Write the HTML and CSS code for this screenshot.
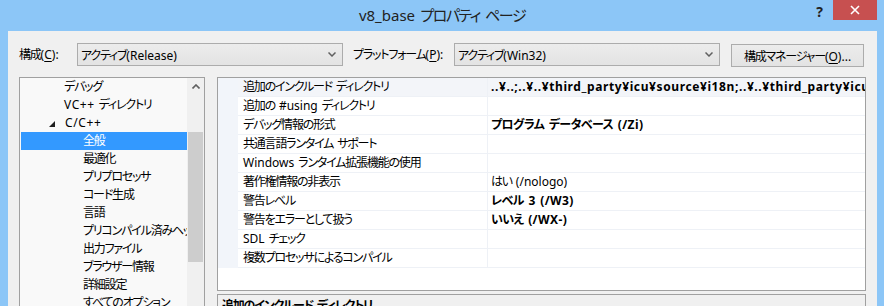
FILE: index.html
```html
<!DOCTYPE html>
<html lang="ja">
  <head>
    <meta charset="UTF-8" />
    <title>v8_base プロパティ ページ</title>
    <link rel="stylesheet" href="styles.css">
  </head>
  <body>
    <div class="window">
      <header class="titlebar">
        <h1 class="title"><span class="en">v8_base</span> プロパティ ページ</h1>
        <div class="caption">
          <span class="help">?</span>
          <span class="close">
            <svg width="10" height="10" viewBox="0 0 10 10">
              <path d="M1 1 L9 9 M9 1 L1 9" stroke="#fff" stroke-width="1.6" />
            </svg>
          </span>
        </div>
      </header>
      <div class="client">
        <div class="toolbar">
          <span class="lbl lbl-config">構成<span class="en">(<u>C</u>):</span></span>
          <div class="combo">
            <span>アクティブ<span class="en">(Release)</span></span>
            <svg class="chevron" width="8" height="5" viewBox="0 0 8 5">
              <path d="M0.5 0.5 L4 4 L7.5 0.5" fill="none" stroke="#606060" stroke-width="1.5" />
            </svg>
          </div>
          <span class="lbl lbl-platform">プラットフォーム<span class="en">(<u>P</u>):</span></span>
          <div class="combo">
            <span>アクティブ<span class="en">(Win32)</span></span>
            <svg class="chevron" width="8" height="5" viewBox="0 0 8 5">
              <path d="M0.5 0.5 L4 4 L7.5 0.5" fill="none" stroke="#606060" stroke-width="1.5" />
            </svg>
          </div>
          <button class="btn">構成マネージャー<span class="en">(<u>O</u>)...</span></button>
        </div>

        <div class="panes">
          <div class="tree">
            <ul class="tree-list">
              <li class="lv1">デバッグ</li>
              <li class="lv1"><span class="en">VC++</span> ディレクトリ</li>
              <li class="lv1 open">
                <svg class="expander" width="6" height="6" viewBox="0 0 6 6">
                  <polygon points="6,0 6,6 0,6" fill="#1e1e1e" />
                </svg><span class="en">C/C++</span>
              </li>
              <li class="lv2 selected">全般</li>
              <li class="lv2">最適化</li>
              <li class="lv2">プリプロセッサ</li>
              <li class="lv2">コード生成</li>
              <li class="lv2">言語</li>
              <li class="lv2">プリコンパイル済みヘッダー</li>
              <li class="lv2">出力ファイル</li>
              <li class="lv2">ブラウザー情報</li>
              <li class="lv2">詳細設定</li>
              <li class="lv2">すべてのオプション</li>
            </ul>
            <div class="scrollbar">
              <div class="scroll-up">
                <svg width="8" height="5" viewBox="0 0 8 5">
                  <path d="M0.5 4.5 L4 1 L7.5 4.5" fill="none" stroke="#606060" stroke-width="1.6" />
                </svg>
              </div>
              <div class="thumb"></div>
            </div>
          </div>

          <div class="props">
            <div class="grid">
              <div class="row current">
                <span class="margin"></span>
                <span class="name">追加のインクルード ディレクトリ</span>
                <span class="value strong path">..¥..;..¥..¥third_party¥icu¥source¥i18n;..¥..¥third_party¥icu¥source¥common</span>
              </div>
              <div class="row">
                <span class="margin"></span>
                <span class="name">追加の <span class="en">#using</span> ディレクトリ</span>
                <span class="value"></span>
              </div>
              <div class="row">
                <span class="margin"></span>
                <span class="name">デバッグ情報の形式</span>
                <span class="value strong">プログラム データベース <span class="en">(/Zi)</span></span>
              </div>
              <div class="row">
                <span class="margin"></span>
                <span class="name">共通言語ランタイム サポート</span>
                <span class="value"></span>
              </div>
              <div class="row">
                <span class="margin"></span>
                <span class="name"><span class="en">Windows</span> ランタイム拡張機能の使用</span>
                <span class="value"></span>
              </div>
              <div class="row">
                <span class="margin"></span>
                <span class="name">著作権情報の非表示</span>
                <span class="value">はい <span class="en">(/nologo)</span></span>
              </div>
              <div class="row">
                <span class="margin"></span>
                <span class="name">警告レベル</span>
                <span class="value strong">レベル <span class="en">3 (/W3)</span></span>
              </div>
              <div class="row">
                <span class="margin"></span>
                <span class="name">警告をエラーとして扱う</span>
                <span class="value strong">いいえ <span class="en">(/WX-)</span></span>
              </div>
              <div class="row">
                <span class="margin"></span>
                <span class="name"><span class="en">SDL</span> チェック</span>
                <span class="value"></span>
              </div>
              <div class="row">
                <span class="margin"></span>
                <span class="name">複数プロセッサによるコンパイル</span>
                <span class="value"></span>
              </div>
            </div>
            <div class="desc">
              <strong>追加のインクルード ディレクトリ</strong>
            </div>
          </div>
        </div>
      </div>
    </div>
  </body>
</html>
```

FILE: styles.css
```css
* {
  box-sizing: border-box;
}
body {
  margin: 0;
  width: 884px;
  height: 306px;
  overflow: hidden;
  background-color: #8cc6f7;
  font-family: "Noto Sans", "Noto Sans CJK JP", sans-serif;
  font-size: 12px;
  font-feature-settings: "palt";
  letter-spacing: -1.2px;
  word-spacing: 2px;
  color: #000;
}
/* latin runs keep their natural spacing */
.en {
  letter-spacing: 0;
  word-spacing: 1px;
}
u {
  text-decoration-thickness: 1px;
  text-underline-offset: 2px;
}

/* title bar */
.titlebar {
  height: 31px;
  display: grid;
  grid-template-columns: 1fr auto 1fr;
}
.title {
  grid-column: 2;
  margin: 0;
  font-size: 15px;
  font-weight: normal;
  line-height: 31px;
  letter-spacing: -1.5px;
  word-spacing: 3px;
  color: #222;
}
.caption {
  grid-column: 3;
  justify-self: end;
  display: flex;
  align-items: flex-start;
  margin-right: 7px;
}
.help {
  font-weight: bold;
  font-size: 14px;
  line-height: 24px;
  letter-spacing: 0;
  color: #222;
  margin-right: 10px;
}
.close {
  width: 44px;
  height: 20px;
  background-color: #c75050;
  display: flex;
  align-items: center;
  justify-content: center;
}

/* dialog body */
.client {
  margin: 0 7px 0 8px;
  height: 275px;
  padding: 12px 11px 0;
  background-color: #f0f0f0;
}
.toolbar {
  display: flex;
  align-items: flex-start;
  height: 23px;
}
.lbl {
  line-height: 23px;
}
.lbl-config {
  width: 58px;
}
.lbl-platform {
  width: 101px;
  margin-left: 10px;
}
.combo {
  width: 266px;
  height: 23px;
  display: flex;
  align-items: center;
  justify-content: space-between;
  padding: 0 6px 0 3px;
  border: 1px solid #acacac;
  background: linear-gradient(#ececec, #e3e3e3);
}
.btn {
  width: 133px;
  height: 23px;
  margin: 1px 0 0 11px;
  padding: 0;
  border: 1px solid #acacac;
  background: linear-gradient(#ececec, #e3e3e3);
  font: inherit;
  letter-spacing: inherit;
  color: #000;
}

.panes {
  display: flex;
  gap: 12px;
  margin-top: 11px;
}

/* tree */
.tree {
  width: 186px;
  height: 240px;
  flex-shrink: 0;
  display: flex;
  border: 1px solid #a0a0a0;
  background-color: #f9f9f9;
}
.tree-list {
  flex: 1;
  min-width: 0;
  margin: 0;
  padding: 0;
  list-style: none;
  overflow: hidden;
}
.tree-list li {
  height: 18px;
  line-height: 18px;
  white-space: nowrap;
  overflow: hidden;
}
.tree-list .en {
  letter-spacing: 0.6px;
}
.lv1 {
  padding-left: 44px;
}
.lv1.open {
  padding-left: 29px;
}
.expander {
  margin-right: 10px;
  vertical-align: 0;
}
.lv2 {
  padding-left: 63px;
}
.selected {
  margin-left: 1px;
  padding-left: 62px;
  background-color: #3399ff;
  color: #fff;
}
.scrollbar {
  width: 17px;
  background-color: #f0f0f0;
}
.scroll-up {
  height: 17px;
  display: flex;
  align-items: center;
  justify-content: center;
}
.thumb {
  height: 130px;
  margin: 37px 1px 0;
  background-color: #cdcdcd;
}

/* property grid */
.props {
  flex: 1;
}
.grid {
  height: 214px;
  border: 1px solid #a0a0a0;
  background-color: #fff;
}
.row {
  display: grid;
  grid-template-columns: 20px 250px 1fr;
  height: 19px;
}
.margin {
  background-color: #f2f5fa;
}
.name,
.value {
  line-height: 18px;
  border-bottom: 1px solid #eef1f6;
  white-space: nowrap;
  overflow: hidden;
}
.name {
  padding-left: 5px;
  border-right: 1px solid #eef1f6;
}
.value {
  padding-left: 3px;
}
.strong {
  font-weight: bold;
  letter-spacing: -0.6px;
}
.strong .en {
  letter-spacing: 0.4px;
}
.path {
  letter-spacing: 0.6px;
}
.current .name,
.current .value {
  background-color: #f3f5f9;
}

.desc {
  height: 60px;
  margin-top: 3px;
  padding: 1px 4px;
  border: 1px solid #a0a0a0;
  background-color: #f0f0f0;
}
```
